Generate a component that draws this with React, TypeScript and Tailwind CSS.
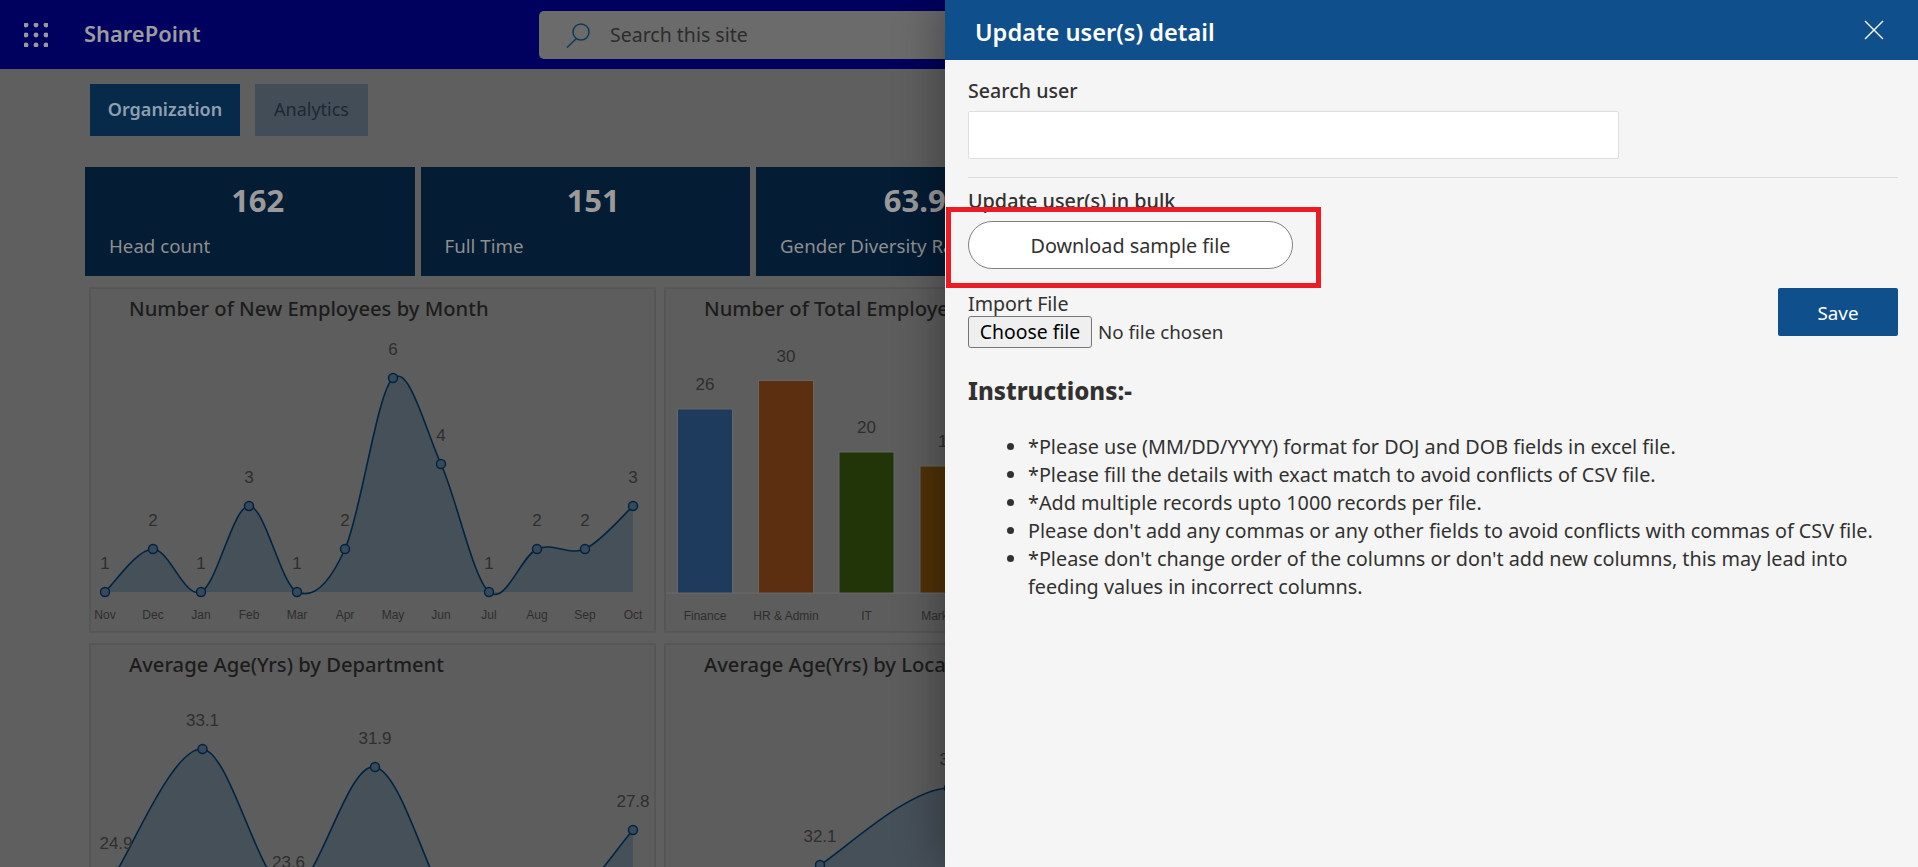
import React from "react";

type P = [number, number];

const splinePath = (pts: P[], k = 1 / 6) => {
  let d = `M${pts[0][0]},${pts[0][1]}`;
  for (let i = 0; i < pts.length - 1; i++) {
    const p0 = pts[Math.max(i - 1, 0)];
    const p1 = pts[i];
    const p2 = pts[i + 1];
    const p3 = pts[Math.min(i + 2, pts.length - 1)];
    d += ` C${p1[0] + k * (p2[0] - p0[0])},${p1[1] + k * (p2[1] - p0[1])} ${p2[0] - k * (p3[0] - p1[0])},${p2[1] - k * (p3[1] - p1[1])} ${p2[0]},${p2[1]}`;
  }
  return d;
};

const AreaChart = ({
  viewBox,
  height,
  width,
  pts,
  labels,
  axis,
  base,
}: {
  viewBox: string;
  height: number;
  width: number;
  pts: P[];
  labels: string[];
  axis?: string[];
  base: number;
}) => {
  const line = splinePath(pts);
  const area = `${line} L${pts[pts.length - 1][0]},${base} L${pts[0][0]},${base} Z`;
  return (
    <svg viewBox={viewBox} width={width} height={height} className="block">
      <path d={area} fill="#465059" />
      <path d={line} fill="none" stroke="#002442" strokeWidth="1.6" />
      {pts.map((p, i) => (
        <g key={i}>
          <circle cx={p[0]} cy={p[1]} r="4.5" fill="#38495a" stroke="#002442" strokeWidth="1.5" />
          {labels[i] && (
            <text
              x={p[0]}
              y={p[1] - 23}
              textAnchor="middle"
              fontSize="17"
              fill="#2e2e2e"
              fontFamily="'Liberation Sans', Arial, sans-serif"
            >
              {labels[i]}
            </text>
          )}
          {axis && (
            <text
              x={p[0]}
              y={base + 27}
              textAnchor="middle"
              fontSize="12"
              fill="#2e2e2e"
              fontFamily="'Liberation Sans', Arial, sans-serif"
            >
              {axis[i]}
            </text>
          )}
        </g>
      ))}
    </svg>
  );
};

const yOf = [0, 592, 549, 506, 464, 421, 378];
const vals = [1, 2, 1, 3, 1, 2, 6, 4, 1, 2, 2, 3];
const months = ["Nov", "Dec", "Jan", "Feb", "Mar", "Apr", "May", "Jun", "Jul", "Aug", "Sep", "Oct"];
const newEmp: P[] = vals.map((v, i) => [105 + i * 48, yOf[v]]);

const ageDept: P[] = [
  [116, 872],
  [202.5, 749],
  [288.5, 891],
  [375, 767],
  [461, 925],
  [547, 925],
  [633, 830],
];
const ageDeptLabels = ["24.9", "33.1", "23.6", "31.9", "", "", "27.8"];

const ageLoc: P[] = [
  [820, 865],
  [949, 788],
  [1070, 860],
];

const bars = [
  { x: 677.5, top: 409, c: "#1e3a5c", v: "26", n: "Finance" },
  { x: 758.5, top: 380.5, c: "#5d2f11", v: "30", n: "HR & Admin" },
  { x: 839, top: 452, c: "#213509", v: "20", n: "IT" },
  { x: 920, top: 466, c: "#4f3208", v: "18", n: "Marketing" },
];

const Card = ({ title, children }: { title: string; children: React.ReactNode }) => (
  <div className="h-[346px] border-2 border-[#565656] bg-[#5d5d5d]">
    <div className="h-[41px] pl-[38px] pt-[5px] text-[20.2px] leading-[28px] font-medium text-[#1c1c1c] whitespace-nowrap">
      {title}
    </div>
    {children}
  </div>
);

const Kpi = ({ n, label }: { n: string; label: string }) => (
  <div className="w-[329.5px] h-[109px] bg-[#041c34] flex flex-col">
    <div className="pl-[16px] pt-[12px] h-[67px] text-center text-[31px] leading-[42px] font-bold text-[#9a9a9a]">
      {n}
    </div>
    <div className="pl-[24px] text-[18.7px] leading-[24px] text-[#8f8f8f]">{label}</div>
  </div>
);

const instructions = [
  "*Please use (MM/DD/YYYY) format for DOJ and DOB fields in excel file.",
  "*Please fill the details with exact match to avoid conflicts of CSV file.",
  "*Add multiple records upto 1000 records per file.",
  "Please don't add any commas or any other fields to avoid conflicts with commas of CSV file.",
  "*Please don't change order of the columns or don't add new columns, this may lead into feeding values in incorrect columns.",
];

export default function App() {
  return (
    <div
      className="relative w-full h-[867px] overflow-hidden bg-[#5f5f5f]"
      style={{ fontFamily: "'Noto Sans', 'Open Sans', sans-serif" }}
    >
      <header className="h-[69px] bg-[#00005e] flex items-center">
        <svg width="24" height="24" viewBox="0 0 24 24" className="ml-[24px]" fill="#9a9a9a">
          {[2, 12, 22].map((y) =>
            [2, 12, 22].map((x) => <circle key={`${x}-${y}`} cx={x} cy={y} r="2.4" />)
          )}
        </svg>
        <div className="ml-[36px] w-[455px] text-[21.9px] font-semibold text-[#9c9c9c]">SharePoint</div>
        <div className="w-[640px] h-[48px] rounded-[5px] bg-[#6b6b6b] flex items-center pl-[26px]">
          <svg width="26" height="26" viewBox="0 0 26 26" fill="none" stroke="#0c3a5c" strokeWidth="1.5">
            <circle cx="16" cy="10" r="8" />
            <path d="M11 17 L2 25.5" />
          </svg>
          <span className="ml-[19px] text-[19.5px] text-[#2c2c2c]">Search this site</span>
        </div>
      </header>

      <nav className="ml-[90px] mt-[15px] h-[52px] flex gap-[15px]">
        <div className="w-[150px] pb-[2px] bg-[#07294a] flex items-center justify-center text-[18px] font-semibold text-[#8ea0b0]">
          Organization
        </div>
        <div className="w-[113px] pb-[2px] bg-[#434d57] flex items-center justify-center text-[18px] text-[#1b2833]">
          Analytics
        </div>
      </nav>

      <section className="ml-[85px] mt-[31px] flex gap-[6px]">
        <Kpi n="162" label="Head count" />
        <Kpi n="151" label="Full Time" />
        <Kpi n="63.9%" label="Gender Diversity Ratio" />
      </section>

      <section className="ml-[89px] mt-[11px] w-[1142px] grid grid-cols-2 gap-x-[8px] gap-y-[10px]">
        <Card title="Number of New Employees by Month">
          <AreaChart
            viewBox="91 330 563 300"
            width={563}
            height={300}
            pts={newEmp}
            labels={vals.map(String)}
            axis={months}
            base={592}
          />
        </Card>
        <Card title="Number of Total Employees by Department">
          <svg viewBox="666 330 563 300" width={563} height={300} className="block">
            <line x1="666" y1="593" x2="1229" y2="593" stroke="#6a6a6a" />
            {bars.map((b) => (
              <g key={b.n} fontFamily="'Liberation Sans', Arial, sans-serif" textAnchor="middle">
                <rect x={b.x} y={b.top} width="55" height={593 - b.top} fill={b.c} stroke="#666666" />
                <text x={b.x + 27.5} y={b.top - 19} fontSize="17" fill="#2e2e2e">
                  {b.v}
                </text>
                <text x={b.x + 27.5} y={620} fontSize="12" fill="#2e2e2e">
                  {b.n}
                </text>
              </g>
            ))}
          </svg>
        </Card>
        <Card title="Average Age(Yrs) by Department">
          <AreaChart
            viewBox="91 686 563 300"
            width={563}
            height={300}
            pts={ageDept}
            labels={ageDeptLabels}
            base={950}
          />
        </Card>
        <Card title="Average Age(Yrs) by Location">
          <AreaChart
            viewBox="666 686 563 300"
            width={563}
            height={300}
            pts={ageLoc}
            labels={["32.1", "36", ""]}
            base={950}
          />
        </Card>
      </section>

      <aside className="absolute top-0 right-0 w-[973px] h-[867px] bg-[#f5f5f5] shadow-[-8px_0_40px_rgba(0,0,0,0.3)] text-[#323130]">
        <div className="h-[60px] bg-[#0f4f8b] flex items-center justify-between pl-[30px] pr-[34px]">
          <h1 className="pt-[5px] text-[23.6px] font-semibold text-white">Update user(s) detail</h1>
          <svg width="20" height="20" viewBox="0 0 20 20" stroke="#ffffff" strokeWidth="1.4">
            <path d="M1 1 L19 19 M19 1 L1 19" />
          </svg>
        </div>

        <div className="pl-[23px] pr-[20px]">
          <div className="mt-[19px] h-[24px] text-[19.6px] leading-[24px] font-medium">Search user</div>
          <div className="mt-[8px] w-[651px] h-[48px] bg-white border border-[#dedede] rounded-[2px]" />
          <div className="mt-[18px] h-px bg-[#dcdcdc]" />
          <div className="mt-[11px] h-[24px] text-[19.8px] leading-[24px] font-medium whitespace-nowrap">
            Update user(s) in bulk
          </div>

          <div className="relative mt-[8px] w-[325px]">
            <button className="w-[325px] h-[48px] pt-[2px] rounded-full border border-[#808080] bg-white text-[19.8px] text-[#323130]">
              Download sample file
            </button>
            <div className="absolute left-[-22px] top-[-14px] w-[375px] h-[81px] border-[5px] border-[#ed1c24]" />
          </div>

          <div className="mt-[19px] flex justify-between items-start">
            <div>
              <div className="mt-[4px] h-[24px] text-[19.6px] leading-[24px]">Import File</div>
              <div className="flex items-center">
                <button className="w-[124px] h-[32px] bg-[#efefef] border border-[#767676] rounded-[3px] text-[19.4px] leading-[28px] text-black">
                  Choose file
                </button>
                <span className="ml-[6px] text-[18.8px]">No file chosen</span>
              </div>
            </div>
            <button className="w-[120px] h-[48px] pt-[2px] bg-[#0f4f8b] rounded-[2px] text-[18.8px] text-white">
              Save
            </button>
          </div>

          <h2 className="mt-[27px] text-[24px] leading-[32px] font-extrabold">Instructions:-</h2>
          <ul className="mt-[26px] pl-[60px] list-disc text-[19.8px] leading-[28px]">
            {instructions.map((t) => (
              <li key={t}>{t}</li>
            ))}
          </ul>
        </div>
      </aside>
    </div>
  );
}
